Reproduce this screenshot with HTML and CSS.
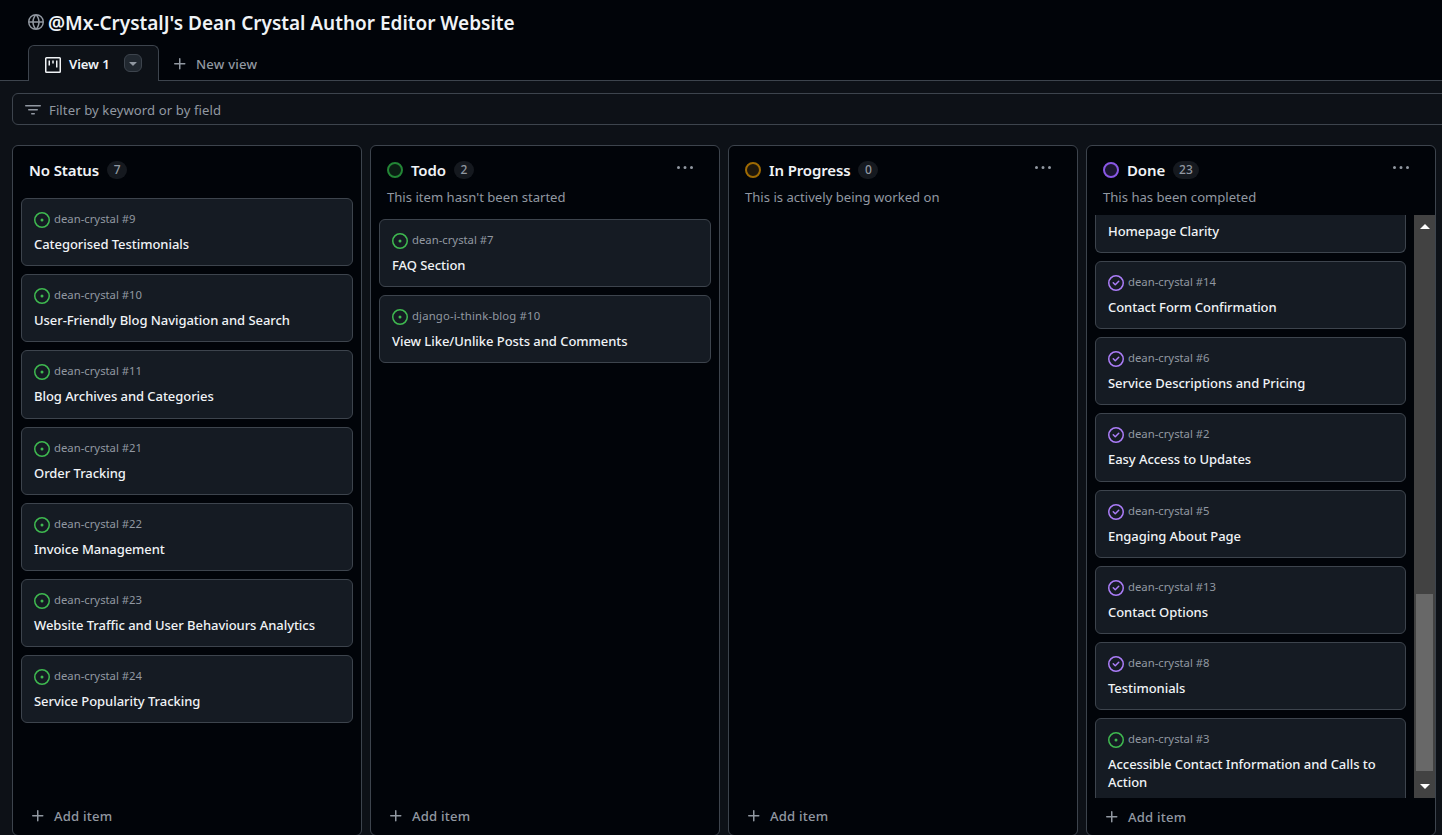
FILE: index.html
```
<!DOCTYPE html>
<html lang="en">
<head>
<meta charset="utf-8">
<title>@Mx-CrystalJ's Dean Crystal Author Editor Website</title>
<link rel="stylesheet" href="styles.css">
</head>
<body>
<svg class="sprite" aria-hidden="true">
  <symbol id="globe" viewBox="0 0 16 16"><path d="M8 0a8 8 0 1 1 0 16A8 8 0 0 1 8 0ZM5.78 8.75a9.64 9.64 0 0 0 1.363 4.177c.255.426.542.832.857 1.215.245-.296.551-.705.857-1.215A9.64 9.64 0 0 0 10.22 8.75Zm4.44-1.5a9.64 9.64 0 0 0-1.363-4.177c-.307-.51-.612-.919-.857-1.215a9.927 9.927 0 0 0-.857 1.215A9.64 9.64 0 0 0 5.78 7.25Zm-5.944 1.5H1.543a6.507 6.507 0 0 0 4.666 5.5c-.123-.181-.24-.365-.352-.552-.715-1.192-1.437-2.874-1.581-4.948Zm-2.733-1.5h2.733c.144-2.074.866-3.756 1.58-4.948.12-.197.237-.381.353-.552a6.507 6.507 0 0 0-4.666 5.5Zm10.181 1.5c-.144 2.074-.866 3.756-1.58 4.948-.12.197-.237.381-.353.552a6.507 6.507 0 0 0 4.666-5.5Zm2.733-1.5a6.507 6.507 0 0 0-4.666-5.5c.123.181.24.365.353.552.714 1.192 1.436 2.874 1.58 4.948Z"/></symbol>
  <symbol id="plus" viewBox="0 0 16 16"><path d="M7.75 2a.75.75 0 0 1 .75.75V7h4.25a.75.75 0 0 1 0 1.5H8.5v4.25a.75.75 0 0 1-1.5 0V8.500H2.750a.75.75 0 0 1 0-1.500H7V2.750A.75.75 0 0 1 7.750 2Z"/></symbol>
  <symbol id="dots" viewBox="0 0 16 16"><path d="M8 9a1.500 1.500 0 1 0 0-3 1.500 1.500 0 0 0 0 3ZM1.500 9a1.500 1.500 0 1 0 0-3 1.500 1.500 0 0 0 0 3Zm13 0a1.500 1.500 0 1 0 0-3 1.500 1.500 0 0 0 0 3Z"/></symbol>
  <symbol id="open" viewBox="0 0 16 16"><path d="M8 9.500a1.500 1.500 0 1 0 0-3 1.500 1.500 0 0 0 0 3Z"/><path d="M8 0a8 8 0 1 1 0 16A8 8 0 0 1 8 0ZM1.500 8a6.500 6.500 0 1 0 13 0 6.500 6.500 0 0 0-13 0Z"/></symbol>
  <symbol id="closed" viewBox="0 0 16 16"><path d="M11.280 6.780a.75.75 0 0 0-1.060-1.060L7.250 8.690 5.780 7.220a.75.75 0 0 0-1.060 1.060l2 2a.75.75 0 0 0 1.060 0l3.500-3.500Z"/><path d="M16 8A8 8 0 1 1 0 8a8 8 0 0 1 16 0Zm-1.500 0a6.500 6.500 0 1 0-13 0 6.500 6.500 0 0 0 13 0Z"/></symbol>
</svg>
<header class="header">
  <h1 class="title"><svg class="icon globe"><use href="#globe"/></svg><span>@Mx-CrystalJ's Dean Crystal Author Editor Website</span></h1>
  <nav class="tabs">
    <div class="tab">
      <svg class="icon" viewBox="0 0 16 16"><path fill="none" stroke="currentColor" stroke-width="1.500" d="M1.500.75h13a.75.75 0 0 1 .75.75v13a.75.75 0 0 1-.75.75h-13a.75.75 0 0 1-.75-.75v-13a.75.75 0 0 1 .75-.75ZM4.250 3.500v5M8 3.500v3M11.750 3.500v7"/></svg>
      <span class="tab-name">View 1</span>
      <button class="caret"><svg viewBox="0 0 16 16"><path d="m4.427 7.427 3.396 3.396a.25.25 0 0 0 .354 0l3.396-3.396A.25.25 0 0 0 11.396 7H4.604a.25.25 0 0 0-.177.427Z"/></svg></button>
    </div>
    <div class="new-view"><svg class="icon"><use href="#plus"/></svg><span>New view</span></div>
  </nav>
</header>
<div class="filter"><svg class="icon" viewBox="0 0 16 16"><path d="M.75 3h14.500a.75.75 0 0 1 0 1.500H.75a.75.75 0 0 1 0-1.500ZM3 7.750A.75.75 0 0 1 3.750 7h8.500a.75.75 0 0 1 0 1.500h-8.500A.75.75 0 0 1 3 7.750Zm3 4a.75.75 0 0 1 .75-.75h2.500a.75.75 0 0 1 0 1.500h-2.500a.75.75 0 0 1-.75-.75Z"/></svg><span>Filter by keyword or by field</span></div>
<main class="board">
  <section class="column">
    <div class="column-head plain"><div class="head-row"><h2>No Status</h2><span class="count">7</span></div></div>
    <div class="list">
      <article class="card"><div class="meta"><svg class="icon open"><use href="#open"/></svg><span>dean-crystal #9</span></div><h3>Categorised Testimonials</h3></article>
      <article class="card"><div class="meta"><svg class="icon open"><use href="#open"/></svg><span>dean-crystal #10</span></div><h3>User-Friendly Blog Navigation and Search</h3></article>
      <article class="card"><div class="meta"><svg class="icon open"><use href="#open"/></svg><span>dean-crystal #11</span></div><h3>Blog Archives and Categories</h3></article>
      <article class="card"><div class="meta"><svg class="icon open"><use href="#open"/></svg><span>dean-crystal #21</span></div><h3>Order Tracking</h3></article>
      <article class="card"><div class="meta"><svg class="icon open"><use href="#open"/></svg><span>dean-crystal #22</span></div><h3>Invoice Management</h3></article>
      <article class="card"><div class="meta"><svg class="icon open"><use href="#open"/></svg><span>dean-crystal #23</span></div><h3>Website Traffic and User Behaviours Analytics</h3></article>
      <article class="card"><div class="meta"><svg class="icon open"><use href="#open"/></svg><span>dean-crystal #24</span></div><h3>Service Popularity Tracking</h3></article>
    </div>
    <div class="add"><svg class="icon"><use href="#plus"/></svg><span>Add item</span></div>
  </section>
  <section class="column">
    <div class="column-head"><div class="head-row"><i class="status green"></i><h2>Todo</h2><span class="count">2</span><svg class="icon more"><use href="#dots"/></svg></div><p>This item hasn't been started</p></div>
    <div class="list">
      <article class="card"><div class="meta"><svg class="icon open"><use href="#open"/></svg><span>dean-crystal #7</span></div><h3>FAQ Section</h3></article>
      <article class="card"><div class="meta"><svg class="icon open"><use href="#open"/></svg><span class="wide">django-i-think-blog #10</span></div><h3>View Like/Unlike Posts and Comments</h3></article>
    </div>
    <div class="add"><svg class="icon"><use href="#plus"/></svg><span>Add item</span></div>
  </section>
  <section class="column">
    <div class="column-head"><div class="head-row"><i class="status amber"></i><h2>In Progress</h2><span class="count">0</span><svg class="icon more"><use href="#dots"/></svg></div><p>This is actively being worked on</p></div>
    <div class="list"></div>
    <div class="add"><svg class="icon"><use href="#plus"/></svg><span>Add item</span></div>
  </section>
  <section class="column">
    <div class="column-head scrolled"><div class="head-row"><i class="status purple"></i><h2>Done</h2><span class="count">23</span><svg class="icon more"><use href="#dots"/></svg></div><p>This has been completed</p></div>
    <div class="scroller">
      <div class="list">
        <article class="card first"><h3>Homepage Clarity</h3></article>
        <article class="card"><div class="meta"><svg class="icon closed"><use href="#closed"/></svg><span>dean-crystal #14</span></div><h3>Contact Form Confirmation</h3></article>
        <article class="card"><div class="meta"><svg class="icon closed"><use href="#closed"/></svg><span>dean-crystal #6</span></div><h3>Service Descriptions and Pricing</h3></article>
        <article class="card"><div class="meta"><svg class="icon closed"><use href="#closed"/></svg><span>dean-crystal #2</span></div><h3>Easy Access to Updates</h3></article>
        <article class="card"><div class="meta"><svg class="icon closed"><use href="#closed"/></svg><span>dean-crystal #5</span></div><h3>Engaging About Page</h3></article>
        <article class="card"><div class="meta"><svg class="icon closed"><use href="#closed"/></svg><span>dean-crystal #13</span></div><h3>Contact Options</h3></article>
        <article class="card"><div class="meta"><svg class="icon closed"><use href="#closed"/></svg><span>dean-crystal #8</span></div><h3>Testimonials</h3></article>
        <article class="card last"><div class="meta"><svg class="icon open"><use href="#open"/></svg><span>dean-crystal #3</span></div><h3>Accessible Contact Information and Calls to<br>Action</h3></article>
      </div>
      <div class="scrollbar"><i class="arrow up"></i><i class="thumb"></i><i class="arrow down"></i></div>
    </div>
    <div class="add low"><svg class="icon"><use href="#plus"/></svg><span>Add item</span></div>
  </section>
</main>
</body>
</html>
```
FILE: styles.css
```
* { box-sizing: border-box; }
html, body { height: 100%; overflow: hidden; }
body { margin: 0; background: #0d1117; color: #f0f3f6; font: 13.1px/20px "Noto Sans", "Open Sans", sans-serif; }
h1, h2, h3, p { margin: 0; white-space: nowrap; }
.sprite { display: none; }
.icon { width: 16px; height: 16px; flex: none; display: block; fill: currentColor; }

.header { height: 81px; background: #010409; border-bottom: 1px solid #3d444d; padding: 10px 28px 0; }
.title { display: flex; height: 26px; gap: 4px; font-size: 19px; line-height: 26px; font-weight: 600; letter-spacing: -0.01px; }
.globe { margin-top: 4px; color: #9198a1; }
.tabs { display: flex; height: 36px; margin-top: 9px; }
.tab { display: flex; align-items: center; width: 131px; height: 36px; padding-left: 16px; background: #0d1117; border: 1px solid #3d444d; border-bottom: 0; border-radius: 6px 6px 0 0; padding-top: 2px; }
.tab-name { width: 55px; margin: -2px 0 0 8px; font-weight: 600; letter-spacing: -0.1px; }
.caret { width: 18px; height: 18px; padding: 0; margin-top: -4px; border: 1px solid #3d444d; border-radius: 6px; background: #212830; }
.caret svg { display: block; width: 16px; height: 16px; fill: #9198a1; }
.new-view { display: flex; align-items: center; gap: 8px; margin-left: 13px; padding-top: 2px; color: #9198a1; font-weight: 500; letter-spacing: 0.2px; }

.filter { display: flex; align-items: center; gap: 8px; height: 32px; margin: 12px -8px 0 12px; padding: 2px 12px 0; border: 1px solid #3d444d; border-radius: 6px; color: #9198a1; letter-spacing: 0.1px; }

.board { display: flex; gap: 8px; height: 691px; margin: 20px 0 0 12px; }
.column { display: flex; flex-direction: column; flex: none; width: 350px; height: 691px; border: 1px solid #3d444d; border-radius: 6px; background: #010409; }
.column-head { height: 73px; padding: 12px 16px 0; flex: none; }
.column-head.plain { height: 52px; }
.column-head.scrolled { height: 69px; }
.head-row { display: flex; align-items: center; height: 24px; }
.column-head h2 { font-size: 15px; line-height: 24px; font-weight: 600; letter-spacing: -0.13px; }
.status { width: 16px; height: 16px; margin-right: 8px; border: 2px solid #238636; border-radius: 50%; background: #0a1d13; }
.status.amber { border-color: #9e6a03; background: #1d160b; }
.status.purple { border-color: #8957e5; background: #1a1530; }
.count { min-width: 20px; height: 18px; margin-left: 8px; padding: 0 6px; border-radius: 9px; background: #15191f; color: #9198a1; font-size: 12px; line-height: 18px; font-weight: 500; text-align: center; }
.more { margin: -5px 10px 0 auto; color: #9198a1; }
.column-head p { color: #9198a1; margin-top: 5px; }

.list { display: flex; flex-direction: column; flex: 1; min-height: 0; gap: 8px; padding: 0 8px; }
.card { flex: none; height: 68.2px; padding: 12px; border: 1px solid #3d444d; border-radius: 6px; background: #151b23; }
.meta { display: flex; height: 18px; gap: 4px; color: #9198a1; font-size: 11.300px; line-height: 16px; white-space: nowrap; }
.meta .wide { letter-spacing: 0.16px; }
.meta .icon { margin-top: 1px; }
.open { color: #3fb950; }
.closed { color: #ab7df8; }
.card h3 { margin-top: 6px; font-size: 13px; line-height: 18px; font-weight: 500; letter-spacing: -0.05px; }
.card.first { height: 38px; padding-top: 1px; border-top: 0; border-radius: 0 0 6px 6px; }
.card.last { height: 86px; }
.scroller { display: flex; flex: none; height: 583px; overflow: hidden; }
.scrollbar { display: flex; flex-direction: column; width: 21px; flex: none; padding: 9px 2px 9px; background: #424242; }
.arrow { width: 10px; height: 5px; margin-left: 4px; background: #fff; flex: none; }
.up { clip-path: polygon(50% 0, 100% 100%, 0 100%); }
.down { clip-path: polygon(0 0, 100% 0, 50% 100%); margin-top: auto; }
.thumb { height: 177px; margin-top: 365px; background: #686868; flex: none; }

.add { display: flex; align-items: center; gap: 8px; height: 20px; margin: auto 0 9px 17px; color: #9198a1; font-weight: 500; letter-spacing: 0.2px; }
.add.low { margin-bottom: 8px; }
```
